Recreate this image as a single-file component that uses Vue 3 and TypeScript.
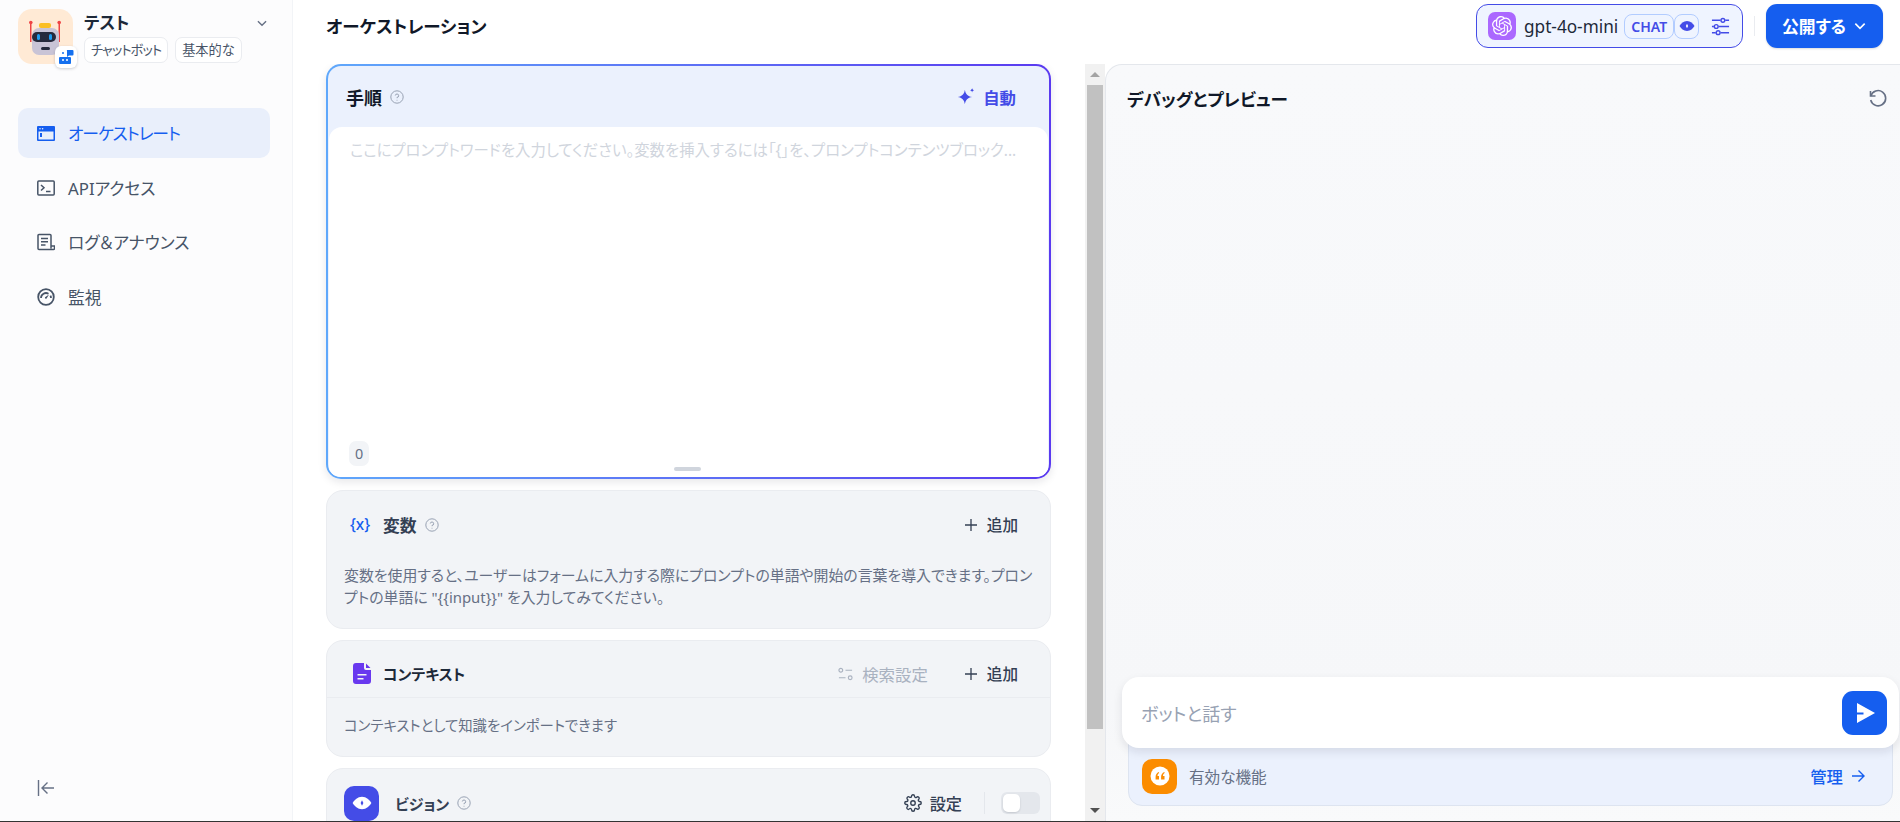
<script setup lang="ts">
const navItems = [
  { key: 'orchestrate', label: 'オーケストレート', active: true },
  { key: 'api', label: 'APIアクセス', active: false },
  { key: 'logs', label: 'ログ＆アナウンス', active: false },
  { key: 'monitor', label: '監視', active: false },
]

const variableHint =
  '変数を使用すると、ユーザーはフォームに入力する際にプロンプトの単語や開始の言葉を導入できます。プロンプトの単語に "{{input}}" を入力してみてください。'
</script>

<template>
  <div class="page">
    <div class="shell">
      <aside class="sidebar">
        <div class="app-head">
          <div class="app-icon">
            <svg viewBox="0 0 55 55" class="robot">
              <rect x="12" y="13" width="1.500" height="20" fill="#ef4444" />
              <rect x="40.500" y="13" width="1.500" height="20" fill="#ef4444" />
              <circle cx="12.800" cy="13.500" r="1.800" fill="#ef4444" />
              <circle cx="41.200" cy="13.500" r="1.800" fill="#ef4444" />
              <rect x="21" y="14" width="12" height="5" rx="2" fill="#fbbf24" />
              <rect x="14" y="19" width="27" height="27" rx="7" fill="#c9c4d6" />
              <rect x="14" y="23" width="24" height="10" rx="5" fill="#262a3c" />
              <rect x="19" y="25" width="3" height="6" rx="1.5" fill="#1e9bf0" />
              <rect x="31" y="25" width="3" height="6" rx="1.5" fill="#1e9bf0" />
              <rect x="23" y="38" width="9" height="3" rx="1.5" fill="#262a3c" />
            </svg>
            <div class="app-badge">
              <svg viewBox="0 0 16 16" class="badge-icon">
                <path d="M9 1h5.5a1 1 0 0 1 1 1v3.5a1 1 0 0 1-1 1H11l-2 1.500V2a1 1 0 0 1 0-1z" fill="#1570ef" />
                <circle cx="5" cy="4" r="1" fill="#1570ef" />
                <path d="M2 8h10a1 1 0 0 1 1 1v5a1 1 0 0 1-1 1H2a1 1 0 0 1-1-1V9a1 1 0 0 1 1-1z" fill="#1570ef" />
                <circle cx="5" cy="11" r="1" fill="#fff" />
                <circle cx="9" cy="11" r="1" fill="#fff" />
              </svg>
            </div>
          </div>
          <div class="app-meta">
            <div class="app-name">テスト</div>
            <div class="app-tags">
              <span class="tag">チャットボット</span>
              <span class="tag">基本的な</span>
            </div>
          </div>
          <svg viewBox="0 0 12 12" class="app-chevron" fill="none" stroke="currentColor" stroke-width="1.2">
            <path d="M2.5 4.5 6 8l3.5-3.5" />
          </svg>
        </div>

        <nav class="nav">
          <a v-for="item in navItems" :key="item.key" class="nav-item" :class="{ active: item.active }">
            <svg v-if="item.key === 'orchestrate'" viewBox="0 0 18 18" class="nav-icon" fill="currentColor">
              <path d="M1 2h16a1 1 0 0 1 1 1v13a1 1 0 0 1-1 1H1a1 1 0 0 1-1-1V3a1 1 0 0 1 1-1zm.5 5.5V15.500h15V7.500h-15zM3 4a.8.8 0 1 0 0 1.600A.8.8 0 0 0 3 4zm2.600 0a.8.8 0 1 0 0 1.600.8.8 0 0 0 0-1.600zM3 9h2v4H3V9z" fill-rule="evenodd" />
            </svg>
            <svg v-else-if="item.key === 'api'" viewBox="0 0 18 18" class="nav-icon" fill="none" stroke="currentColor" stroke-width="1.5">
              <rect x=".8" y="2" width="16.4" height="14" rx="1" />
              <path d="m4 6 3 2.8L4 11.5M9 12.5h4.5" />
            </svg>
            <svg v-else-if="item.key === 'logs'" viewBox="0 0 18 18" class="nav-icon" fill="none" stroke="currentColor" stroke-width="1.5">
              <path d="M14 15.500V2.500a1 1 0 0 0-1-1H2a1 1 0 0 0-1 1v13a1 1 0 0 0 1 1h14.500a1 1 0 0 0 1-1V13H14" />
              <path d="M4 5.500h7M4 8.800h7M4 12h4.500" />
            </svg>
            <svg v-else viewBox="0 0 18 18" class="nav-icon" fill="none" stroke="currentColor" stroke-width="1.8">
              <circle cx="9" cy="9" r="7.8" />
              <path d="M4 10a5 5 0 0 1 7.500-4.300M14 10a5 5 0 0 0-.6-2.400" />
              <path d="M8 9.200 12 6.500l-2.400 4a1.100 1.100 0 0 1-1.600-1.300z" fill="currentColor" stroke="none" />
            </svg>
            <span>{{ item.label }}</span>
          </a>
        </nav>

        <div class="collapse">
          <svg viewBox="0 0 18 18" class="collapse-icon" fill="none" stroke="currentColor" stroke-width="1.4">
            <path d="M1.500 1v16M17 9H5M10.500 3.500 5 9l5.500 5.500" />
          </svg>
        </div>
      </aside>

      <div class="content">
        <header class="topbar">
          <h1 class="page-title">オーケストレーション</h1>
          <div class="topbar-right">
            <div class="model-pill">
              <span class="model-logo">
                <svg viewBox="0 0 24 24" fill="#fff">
                  <path d="M22.2819 9.8211a5.9847 5.9847 0 0 0-.5157-4.9108 6.0462 6.0462 0 0 0-6.5098-2.9A6.0651 6.0651 0 0 0 4.9807 4.1818a5.9847 5.9847 0 0 0-3.9977 2.9 6.0462 6.0462 0 0 0 .7427 7.0966 5.98 5.98 0 0 0 .511 4.9107 6.051 6.051 0 0 0 6.5146 2.9001A5.9847 5.9847 0 0 0 13.2599 24a6.0557 6.0557 0 0 0 5.7718-4.2058 5.9894 5.9894 0 0 0 3.9977-2.9001 6.0557 6.0557 0 0 0-.7475-7.0729zm-9.022 12.6081a4.4755 4.4755 0 0 1-2.8764-1.0408l.1419-.0804 4.7783-2.7582a.7948.7948 0 0 0 .3927-.6813v-6.7369l2.02 1.1686a.071.071 0 0 1 .038.052v5.5826a4.504 4.504 0 0 1-4.4945 4.4944zm-9.6607-4.1254a4.4708 4.4708 0 0 1-.5346-3.0137l.142.0852 4.783 2.7582a.7712.7712 0 0 0 .7806 0l5.8428-3.3685v2.3324a.0804.0804 0 0 1-.0332.0615L9.74 19.9502a4.4992 4.4992 0 0 1-6.1408-1.6464zM2.3408 7.8956a4.485 4.485 0 0 1 2.3655-1.9728V11.6a.7664.7664 0 0 0 .3879.6765l5.8144 3.3543-2.0201 1.1685a.0757.0757 0 0 1-.071 0l-4.8303-2.7865A4.504 4.504 0 0 1 2.3408 7.872zm16.5963 3.8558L13.1038 8.364 15.1192 7.2a.0757.0757 0 0 1 .071 0l4.8303 2.7913a4.4944 4.4944 0 0 1-.6765 8.1042v-5.6772a.79.79 0 0 0-.407-.667zm2.0107-3.0231l-.142-.0852-4.7735-2.7818a.7759.7759 0 0 0-.7854 0L9.409 9.2297V6.8974a.0662.0662 0 0 1 .0284-.0615l4.8303-2.7866a4.4992 4.4992 0 0 1 6.6802 4.66zM8.3065 12.863l-2.02-1.1638a.0804.0804 0 0 1-.038-.0567V6.0742a4.4992 4.4992 0 0 1 7.3757-3.4537l-.142.0805L8.704 5.459a.7948.7948 0 0 0-.3927.6813zm1.0976-2.3654l2.602-1.4998 2.6069 1.4998v2.9994l-2.5974 1.4997-2.6067-1.4997Z" />
                </svg>
              </span>
              <span class="model-name">gpt-4o-mini</span>
              <span class="model-tag">CHAT</span>
              <span class="model-tag eye">
                <svg viewBox="0 0 16 16" class="eye-icon">
                  <path d="M8 3c3.500 0 6 2.600 7.500 5-1.500 2.400-4 5-7.500 5S2 10.400.5 8C2 5.600 4.500 3 8 3z" fill="#444ce7" />
                  <path d="M8 5.800 9.100 8 8 10.200 6.900 8z" fill="#fff" />
                </svg>
              </span>
              <svg viewBox="0 0 20 20" class="sliders" fill="none" stroke="#444ce7" stroke-width="1.5">
                <path d="M1 3.500h9M15 3.500h4M1 10h2M8 10h11M1 16.500h4M10 16.500h9" />
                <circle cx="12.500" cy="3.500" r="2" />
                <circle cx="5.500" cy="10" r="2" />
                <circle cx="7.500" cy="16.500" r="2" />
              </svg>
            </div>
            <span class="vline"></span>
            <button class="publish">
              公開する
              <svg viewBox="0 0 12 12" class="publish-chevron" fill="none" stroke="#fff" stroke-width="1.400">
                <path d="M2 4l4 4 4-4" />
              </svg>
            </button>
          </div>
        </header>

        <div class="workspace">
          <div class="config">
            <div class="config-body">
              <section class="prompt-card">
                <div class="prompt-inner">
                  <div class="prompt-head">
                    <div class="head-left">
                      <span class="prompt-title">手順</span>
                      <svg viewBox="0 0 14 14" class="help" fill="none" stroke="currentColor">
                        <circle cx="7" cy="7" r="6.200" />
                        <path d="M5.300 5.500A1.700 1.700 0 1 1 7 7.400v.8M7 9.800v.8" />
                      </svg>
                    </div>
                    <button class="auto">
                      <svg viewBox="0 0 18 18" class="auto-icon" fill="#444ce7">
                        <path d="M8 2.500c.6 4 2.500 6 6.500 6.500-4 .6-5.900 2.500-6.500 6.500-.6-4-2.500-5.900-6.500-6.500 4-.5 5.900-2.500 6.500-6.500z" />
                        <path d="M14.500 1c.2 1.200.8 1.800 2 2-1.200.2-1.800.8-2 2-.2-1.200-.8-1.800-2-2 1.200-.2 1.800-.8 2-2z" />
                      </svg>
                      自動
                    </button>
                  </div>
                  <div class="prompt-body">
                    <p class="placeholder">ここにプロンプトワードを入力してください。変数を挿入するには「{」を、プロンプトコンテンツブロック...</p>
                    <span class="count">0</span>
                    <span class="handle"></span>
                  </div>
                </div>
              </section>

              <section class="panel">
                <div class="panel-head">
                  <div class="head-left">
                    <span class="var-icon">{x}</span>
                    <span class="panel-title var-title">変数</span>
                    <svg viewBox="0 0 14 14" class="help" fill="none" stroke="currentColor">
                      <circle cx="7" cy="7" r="6.200" />
                      <path d="M5.300 5.500A1.700 1.700 0 1 1 7 7.400v.8M7 9.800v.8" />
                    </svg>
                  </div>
                  <button class="add">
                    <svg viewBox="0 0 12 12" class="plus" fill="none" stroke="currentColor" stroke-width="1.300"><path d="M6 0v12M0 6h12" /></svg>
                    追加
                  </button>
                </div>
                <p class="panel-text var-text">{{ variableHint }}</p>
              </section>

              <section class="panel context">
                <div class="panel-head lined">
                  <div class="head-left">
                    <svg viewBox="0 0 18 21" class="doc-icon">
                      <path d="M3 0h8v5a2 2 0 0 0 2 2h5v11a3 3 0 0 1-3 3H3a3 3 0 0 1-3-3V3a3 3 0 0 1 3-3zM13 .5 17.500 5H13zM4.500 11v1.600h9V11zm0 4v1.600h6V15z" fill="#6938ef" fill-rule="evenodd" />
                    </svg>
                    <span class="panel-title">コンテキスト</span>
                  </div>
                  <div class="head-right">
                    <span class="retrieval">
                      <svg viewBox="0 0 16 14" class="retrieval-icon" fill="none" stroke="currentColor" stroke-width="1.200">
                        <circle cx="3" cy="3" r="2" />
                        <path d="M8 3h7M1 11h7" />
                        <circle cx="13" cy="11" r="2" />
                      </svg>
                      検索設定
                    </span>
                    <button class="add">
                      <svg viewBox="0 0 12 12" class="plus" fill="none" stroke="currentColor" stroke-width="1.300"><path d="M6 0v12M0 6h12" /></svg>
                      追加
                    </button>
                  </div>
                </div>
                <p class="panel-text">コンテキストとして知識をインポートできます</p>
              </section>

              <section class="panel vision">
                <div class="vision-row">
                  <div class="head-left">
                    <span class="vision-icon">
                      <svg viewBox="0 0 16 16">
                        <path d="M8 3c3.500 0 6 2.600 7.500 5-1.500 2.400-4 5-7.500 5S2 10.400.5 8C2 5.600 4.500 3 8 3z" fill="#fff" />
                        <path d="M8 5.800 9.100 8 8 10.200 6.900 8z" fill="#444ce7" />
                      </svg>
                    </span>
                    <span class="panel-title vision-title">ビジョン</span>
                    <svg viewBox="0 0 14 14" class="help" fill="none" stroke="currentColor">
                      <circle cx="7" cy="7" r="6.200" />
                      <path d="M5.300 5.500A1.700 1.700 0 1 1 7 7.400v.8M7 9.800v.8" />
                    </svg>
                  </div>
                  <div class="head-right">
                    <button class="settings">
                      <svg viewBox="0 0 24 24" class="gear" fill="none" stroke="currentColor" stroke-width="1.800">
                        <circle cx="12" cy="12" r="3" />
                        <path d="M19.400 15a1.650 1.650 0 0 0 .33 1.820l.06.06a2 2 0 1 1-2.830 2.830l-.06-.06a1.650 1.650 0 0 0-2.800 1.170V21a2 2 0 1 1-4 0v-.09a1.650 1.650 0 0 0-2.880-1.110l-.06.06a2 2 0 1 1-2.830-2.830l.06-.06A1.650 1.650 0 0 0 3.090 14H3a2 2 0 1 1 0-4h.09A1.650 1.650 0 0 0 4.600 7.120l-.06-.06a2 2 0 1 1 2.830-2.830l.06.06A1.650 1.650 0 0 0 10 3.090V3a2 2 0 1 1 4 0v.09a1.650 1.650 0 0 0 2.800 1.170l.06-.06a2 2 0 1 1 2.830 2.830l-.06.06A1.650 1.650 0 0 0 20.910 10H21a2 2 0 1 1 0 4h-.09a1.650 1.650 0 0 0-1.510 1z" />
                      </svg>
                      設定
                    </button>
                    <span class="vline short"></span>
                    <span class="toggle"><span class="knob"></span></span>
                  </div>
                </div>
              </section>
            </div>
            <div class="scrollbar">
              <span class="sb-btn"><span class="sb-up"></span></span>
              <span class="sb-thumb"></span>
              <span class="sb-btn sb-btn-end"><span class="sb-down"></span></span>
            </div>
          </div>

          <section class="debug">
            <div class="debug-head">
              <h2 class="debug-title">デバッグとプレビュー</h2>
              <svg viewBox="0 0 20 20" class="refresh" fill="none" stroke="currentColor" stroke-width="1.600">
                <path d="M2.500 3v5h5" />
                <path d="M2.800 8A7.600 7.600 0 1 1 2.700 12" />
              </svg>
            </div>
            <div class="chat-area">
              <div class="chat-input">
                <span class="chat-placeholder">ボットと話す</span>
                <button class="send">
                  <svg viewBox="0 0 18 20" class="send-icon" fill="#fff">
                    <path d="M0 0 18 10 0 20v-8.500h6.500V9.500H0z" />
                  </svg>
                </button>
              </div>
              <div class="features">
                <div class="features-left">
                  <span class="quote-icon">
                    <svg viewBox="0 0 20 20" class="quote-svg">
                      <circle cx="10" cy="10" r="9.500" fill="#fff" />
                      <path d="M8.800 6C6.800 7 5.600 8.600 5.600 10.800V13.500H9V10H7.500c0-1.200.6-2.100 1.700-2.900zM14.300 6c-2 1-3.200 2.600-3.200 4.800v2.700h3.400V10H13c0-1.200.6-2.100 1.700-2.900z" fill="#fb8c00" />
                    </svg>
                  </span>
                  <span class="features-text">有効な機能</span>
                </div>
                <a class="manage">
                  管理
                  <svg viewBox="0 0 14 14" class="manage-arrow" fill="none" stroke="currentColor" stroke-width="1.400">
                    <path d="M1 7h12M7.500 1.500 13 7l-5.500 5.500" />
                  </svg>
                </a>
              </div>
            </div>
          </section>
        </div>
      </div>
    </div>
    <div class="edge"></div>
  </div>
</template>

<style>
html, body { margin: 0; overflow: hidden; background: #fff; }
</style>

<style scoped>
.page {
  height: 822px;
  display: flex;
  flex-direction: column;
  font-family: "Noto Sans", "Noto Sans CJK JP", sans-serif;
  font-feature-settings: "palt";
  color: #101828;
}
.shell { flex: 1; min-height: 0; display: flex; }
.edge { height: 1px; background: #333; }

/* sidebar */
.sidebar {
  width: 293px; box-sizing: border-box; flex-shrink: 0;
  display: flex; flex-direction: column;
  background: #fcfcfd; border-right: 1px solid #f2f4f7;
}
.app-head { display: flex; padding: 9px 18px 0; gap: 11px; height: 108px; box-sizing: border-box; flex-shrink: 0; }
.app-icon {
  position: relative; width: 55px; height: 55px; border-radius: 14px;
  background: #ffead5; flex-shrink: 0;
}
.robot { width: 55px; height: 55px; display: block; }
.app-badge {
  position: absolute; right: -4px; bottom: -4px; width: 22px; height: 22px;
  background: #fff; border-radius: 6px; box-shadow: 0 1px 3px rgba(16, 24, 40, 0.2);
  display: flex; align-items: center; justify-content: center;
}
.badge-icon { width: 16px; height: 16px; }
.app-meta { flex: 1; min-width: 0; }
.app-name { font-size: 16.8px; font-weight: 600; line-height: 26px; margin-top: 1px; color: #1d2939; }
.app-tags { display: flex; gap: 7px; margin-top: 1px; }
.tag {
  height: 26px; box-sizing: border-box; padding: 0 6px; line-height: 24px;
  font-size: 13.2px; color: #475467; background: #fff;
  border: 1px solid #eaecf0; border-radius: 7px; white-space: nowrap;
}
.tag:first-child { letter-spacing: -0.9px; }
.app-chevron { width: 14px; height: 14px; color: #667085; margin: 7px 5px 0 4px; }

.nav { display: flex; flex-direction: column; gap: 4.6px; padding: 0 22px 0 18px; }
.nav-item {
  height: 50px; display: flex; align-items: center; gap: 13px; padding: 0 19px;
  border-radius: 10px; font-size: 16.8px; color: #475467;
}
.nav-item.active { background: #e9effb; color: #155eef; letter-spacing: -1px; }
.nav-icon { width: 18px; height: 18px; flex-shrink: 0; }
.collapse { margin-top: auto; padding: 0 0 24px 37px; }
.collapse-icon { width: 18px; height: 18px; display: block; color: #667085; }

/* top bar */
.content { flex: 1; min-width: 0; display: flex; flex-direction: column; }
.topbar {
  height: 64px; box-sizing: border-box; flex-shrink: 0;
  display: flex; align-items: flex-start; justify-content: space-between;
  padding: 4px 17px 0 33px;
}
.page-title { margin: 0; font-size: 17.5px; font-weight: 600; line-height: 44px; }
.topbar-right { display: flex; align-items: center; height: 44px; }
.model-pill {
  height: 44px; width: 267px; box-sizing: border-box; display: flex; align-items: center;
  background: #eff4ff; border: 1px solid #444ce7; border-radius: 12px; padding-left: 11px;
}
.model-logo {
  width: 28px; height: 28px; border-radius: 7px; background: #ab68ff;
  display: flex; align-items: center; justify-content: center; flex-shrink: 0;
}
.model-logo svg { width: 20px; height: 20px; }
.model-name { font-size: 17.2px; margin-left: 8px; margin-right: 6px; white-space: nowrap; color: #1d2939; }
.model-tag {
  height: 25px; box-sizing: border-box; border: 1px solid #b2ccff; border-radius: 8px;
  font-size: 14px; font-weight: 600; color: #444ce7; line-height: 23px; padding: 0 6px;
}
.model-tag.eye { padding: 0; width: 25px; display: flex; align-items: center; justify-content: center; }
.eye-icon { width: 16px; height: 16px; }
.sliders { width: 19px; height: 19px; margin-left: 12px; }
.vline { width: 1px; height: 20px; background: #eaecf0; margin: 0 11px; }
.publish {
  width: 117px; height: 44px; border: none; border-radius: 11px; background: #155eef;
  color: #fff; font: inherit; font-size: 16.8px; font-weight: 600; padding: 0;
  display: flex; align-items: center; justify-content: center; gap: 7px;
  box-shadow: 0 1px 2px rgba(16, 24, 40, 0.15);
}
.publish-chevron { width: 14px; height: 14px; }

/* left column */
.workspace { flex: 1; min-height: 0; display: flex; }
.config { width: 812px; flex-shrink: 0; display: flex; overflow: hidden; }
.config-body {
  flex: 1; min-width: 0; box-sizing: border-box; padding: 0 34px 0 33px;
  display: flex; flex-direction: column; gap: 11px;
}
.scrollbar {
  width: 20px; flex-shrink: 0; background: #f1f1f1; display: flex; flex-direction: column;
}
.sb-btn { height: 21px; display: flex; align-items: center; justify-content: center; flex-shrink: 0; }
.sb-btn-end { margin-top: auto; height: 22px; }
.sb-up { width: 0; height: 0; border: 5px solid transparent; border-top: 0; border-bottom: 5px solid #a3a3a3; }
.sb-down { width: 0; height: 0; border: 5px solid transparent; border-bottom: 0; border-top: 5px solid #505050; }
.sb-thumb { height: 644px; margin: 0 2px; background: #c1c1c1; flex-shrink: 0; }

.prompt-card {
  height: 415px; box-sizing: border-box; padding: 2px; border-radius: 15px; flex-shrink: 0;
  background: linear-gradient(90deg, #5fa8fb, #5a3af0);
  box-shadow: 0 3px 8px rgba(16, 24, 40, 0.1);
}
.prompt-inner {
  height: 100%; display: flex; flex-direction: column; overflow: hidden;
  border-radius: 13px; background: #ebf1fd;
}
.prompt-head {
  height: 61px; flex-shrink: 0; display: flex; align-items: center; justify-content: space-between;
  padding: 0 33px 0 18px;
}
.head-left { display: flex; align-items: center; }
.head-right { display: flex; align-items: center; }
.prompt-title { font-size: 18px; font-weight: 600; color: #101828; }
.help { width: 14px; height: 14px; color: #98a2b3; margin-left: 8px; flex-shrink: 0; }
.auto {
  border: none; background: none; padding: 0; font: inherit; font-size: 16.4px; font-weight: 600;
  color: #444ce7; display: flex; align-items: center; gap: 7px;
}
.auto-icon { width: 20px; height: 20px; }
.prompt-body {
  flex: 1; position: relative; background: #fff; border-radius: 13px 13px 0 0;
  margin: 0 1px; padding: 12px 21px 0;
}
.placeholder {
  margin: 0; font-size: 15.4px; line-height: 24px; color: #d0d5dd; white-space: nowrap;
}
.count {
  position: absolute; left: 20px; bottom: 11px; width: 20px; height: 25px; border-radius: 7px;
  background: #f2f4f7; color: #667085; font-size: 14.4px; line-height: 25px; text-align: center;
}
.handle {
  position: absolute; left: 345px; bottom: 6px; width: 27px; height: 4px;
  background: #d0d5dd; border-radius: 2px;
}

/* cards */
.panel {
  box-sizing: border-box; background: #f2f4f7; border: 1px solid #eaecf0; border-radius: 17px;
  height: 139px; flex-shrink: 0;
}
.panel-head {
  height: 67px; box-sizing: border-box; display: flex; align-items: center; justify-content: space-between;
  padding: 0 32px 0 22px;
}
.panel-title { font-size: 15px; font-weight: 600; color: #344054; }
.var-title { font-size: 16.8px; }
.var-icon { width: 22px; margin-right: 12px; font-size: 15.4px; font-weight: 500; color: #155eef; white-space: nowrap; text-align: center; }
.add {
  border: none; background: none; padding: 0; font: inherit; font-size: 15.6px; font-weight: 500; color: #344054;
  display: flex; align-items: center;
}
.plus { width: 12px; height: 12px; margin-right: 10px; }
.panel-text {
  margin: 0; padding: 0 16px 0 17px; font-size: 14.4px; line-height: 23px; color: #667085;
}
.var-text { font-size: 14.9px; line-height: 22px; padding-top: 6px; }
.context { height: 117px; }
.panel-head.lined { height: 57px; border-bottom: 1px solid #eaecf0; padding: 9px 32px 0 26px; }
.context .panel-text { padding-top: 16px; }
.doc-icon { width: 18px; height: 21px; margin-right: 12px; }
.context .panel-title { color: #1d2939; }
.retrieval {
  display: flex; align-items: center; gap: 9px; font-size: 16.4px; color: #98a2b3; opacity: 0.8; margin-right: 37px;
}
.retrieval-icon { width: 15px; height: 14px; }
.vision { height: 72px; }
.vision-row {
  height: 68px; display: flex; align-items: center; justify-content: space-between;
  padding: 0 10px 0 17px;
}
.vision-icon {
  width: 35px; height: 35px; border-radius: 10px; background: #444ce7; margin-right: 16px;
  display: flex; align-items: center; justify-content: center;
}
.vision-icon svg { width: 20px; height: 20px; }
.settings {
  border: none; background: none; padding: 0; font: inherit; font-size: 16.2px; font-weight: 500;
  color: #344054; display: flex; align-items: center; gap: 8px;
}
.gear { width: 18px; height: 18px; }
.vline.short { height: 22px; margin: 0 16px 0 22px; background: #e4e7ec; }
.toggle {
  width: 39px; height: 22px; border-radius: 6px; background: #e4e7ec; position: relative; display: block;
}
.knob {
  position: absolute; left: 2px; top: 2px; width: 17px; height: 18px; border-radius: 5px;
  background: #fff; box-shadow: 0 1px 2px rgba(16, 24, 40, 0.15);
}

/* debug panel */
.debug {
  flex: 1; min-width: 0; box-sizing: border-box; display: flex; flex-direction: column;
  background: linear-gradient(#f8f9fb, #f6f7f9 85%, #f9fafb);
  border: 1px solid #e4e7ec; border-width: 1px 0 0 1px; border-radius: 17px 0 0 0;
}
.debug-head {
  height: 66px; flex-shrink: 0; display: flex; align-items: center; justify-content: space-between;
  padding: 0 12px 0 21px;
}
.debug-title { margin: 0; font-size: 17.6px; font-weight: 600; color: #101828; }
.refresh { width: 20px; height: 20px; color: #667085; }
.chat-area { margin-top: auto; padding: 0 1px 15px 16px; }
.chat-input {
  position: relative; z-index: 1; height: 71px; box-sizing: border-box;
  display: flex; align-items: center; justify-content: space-between;
  background: #fff; border-radius: 17px; padding: 0 12px 0 19px;
  box-shadow: 0 4px 10px rgba(16, 24, 40, 0.1);
}
.chat-placeholder { font-size: 18px; color: #98a2b3; }
.send {
  width: 45px; height: 44px; border: none; border-radius: 11px; background: #155eef; padding: 0;
  display: flex; align-items: center; justify-content: center;
}
.send-icon { width: 18px; height: 20px; margin-left: 3px; }
.features {
  height: 71px; box-sizing: border-box; margin: -13px 6px 0 6px; padding: 11px 27px 0 13px;
  display: flex; align-items: center; justify-content: space-between;
  background: #ebf1fd; border: 1px solid #dde4f0; border-radius: 0 0 14px 14px;
}
.features-left { display: flex; align-items: center; gap: 12px; }
.quote-icon {
  width: 35px; height: 35px; border-radius: 10px; background: #fb8c00;
  display: flex; align-items: center; justify-content: center;
}
.quote-svg { width: 20px; height: 20px; }
.features-text { font-size: 15.6px; color: #667085; }
.manage {
  display: flex; align-items: center; gap: 8px; font-size: 16.4px; font-weight: 500; color: #155eef;
}
.manage-arrow { width: 14px; height: 14px; }
</style>
